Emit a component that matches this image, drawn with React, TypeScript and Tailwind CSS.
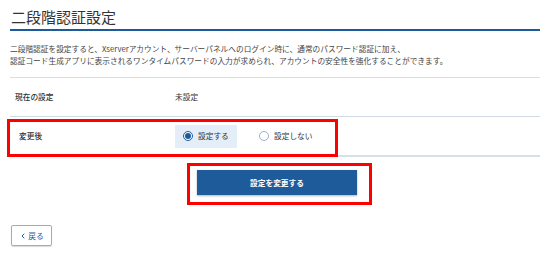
import { ChevronLeft } from 'lucide-react';

const font = { fontFamily: '"Noto Sans CJK JP", "Noto Sans", sans-serif' };

function Radio({ label, checked }: { label: string; checked?: boolean }) {
  return (
    <div
      className={`flex h-[23px] w-[62px] items-center gap-[5px] pl-[8px] ${checked ? 'bg-[#e4eef8]' : ''}`}
    >
      <span
        className={`flex h-[10px] w-[10px] items-center justify-center rounded-full border bg-white ${
          checked ? 'border-[#1d5a9c]' : 'border-[#9fb3c8]'
        }`}
      >
        {checked && <span className="h-[6px] w-[6px] rounded-full bg-[#1d5a9c]" />}
      </span>
      <span className="text-[7.7px] text-[#333]">{label}</span>
    </div>
  );
}

export default function App() {
  return (
    <div className="relative h-[258px] w-[550px] overflow-hidden bg-white text-[#333]" style={font}>
      <div className="px-[10px]">
        <h1 className="border-b-2 border-[#1d5a9c] pb-[1px] pt-[6px] pl-[1px] text-[15px] leading-[22px] font-normal text-[#333]">
          二段階認証設定
        </h1>
        <p className="mt-[12px] text-[7.7px] leading-[12px] text-[#444]">
          二段階認証を設定すると、Xserverアカウント、サーバーパネルへのログイン時に、通常のパスワード認証に加え、
          <br />
          認証コード生成アプリに表示されるワンタイムパスワードの入力が求められ、アカウントの安全性を強化することができます。
        </p>
        <div className="mt-[10px] border-t border-[#d6e0ea]">
          <div className="flex h-[39px] items-center border-b border-[#d2dae3] text-[7.7px]">
            <div className="w-[165px] pl-[5px] font-medium">現在の設定</div>
            <div>未設定</div>
          </div>
          <div className="flex h-[40px] items-center border-b-2 border-[#d6e0ea] text-[7.7px]">
            <div className="w-[165px] pl-[9px] font-medium">変更後</div>
            <div className="flex gap-[14px]">
              <Radio label="設定する" checked />
              <Radio label="設定しない" />
            </div>
          </div>
        </div>
        <div className="mt-[13px] flex justify-center pl-[4px]">
          <button className="h-[25px] w-[160px] bg-[#1e5b9b] text-[7.7px] font-bold text-white shadow-[0_1px_2px_rgba(0,0,0,0.3)]">
            設定を変更する
          </button>
        </div>
        <button className="mt-[30px] ml-[1px] flex h-[21px] w-[41px] items-center justify-center gap-[1px] rounded-[2px] border border-[#8fb0d0] text-[7.7px] text-[#1d5a9c] shadow-[0_1px_1px_rgba(0,0,0,0.15)]">
          <ChevronLeft className="h-[8px] w-[8px]" strokeWidth={3} />
          戻る
        </button>
      </div>

      {/* annotation boxes */}
      <div className="pointer-events-none absolute left-[7px] top-[119px] h-[38px] w-[331px] border-[3px] border-[#ff0000]" />
      <div className="pointer-events-none absolute left-[187px] top-[163px] h-[42px] w-[185px] border-[3px] border-[#ff0000]" />
    </div>
  );
}
